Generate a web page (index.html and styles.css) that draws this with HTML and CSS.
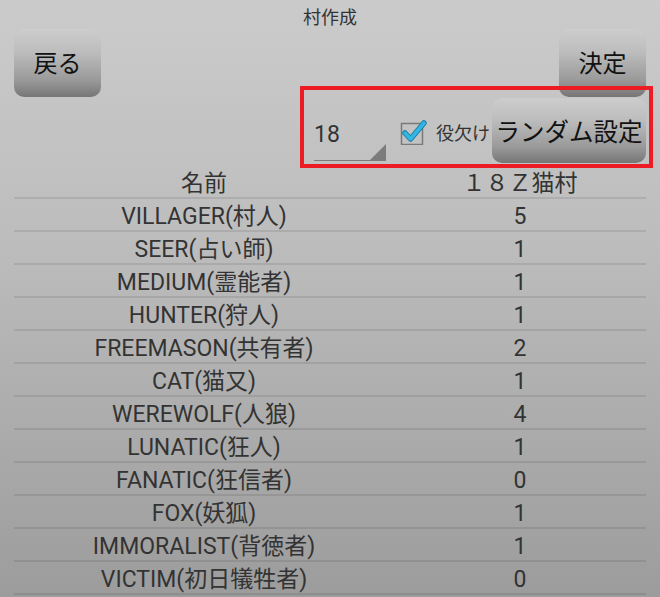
FILE: index.html
```html
<!DOCTYPE html>
<html lang="ja">
<head>
<meta charset="utf-8">
<title>村作成</title>
<link rel="stylesheet" href="styles.css">
</head>
<body>
<div class="screen">
  <div class="title">村作成</div>
  <div class="topbar">
    <button class="btn btn-small">戻る</button>
    <button class="btn btn-small">決定</button>
  </div>
  <div class="controls">
    <div class="spinner">
      <span class="spinner-value">18</span>
      <span class="spinner-tri"></span>
    </div>
    <label class="check">
      <svg class="check-box" width="30" height="30" viewBox="0 0 30 30">
        <rect x="2.5" y="8.5" width="21" height="21" fill="none" stroke="#7a7a7a" stroke-width="1.5"/>
        <path d="M6 18 L11.5 24 L25 8" fill="none" stroke="#1d7fa3" stroke-width="5.5" stroke-linecap="round" stroke-linejoin="round"/>
        <path d="M6 18 L11.5 24 L25 8" fill="none" stroke="#33b5e5" stroke-width="3.5" stroke-linecap="round" stroke-linejoin="round"/>
      </svg>
      <span class="check-label">役欠け</span>
    </label>
    <button class="btn btn-random">ランダム設定</button>
  </div>
  <div class="table">
    <div class="row head"><span>名前</span><span>１８Ｚ猫村</span></div>
    <div class="row"><span>VILLAGER(村人)</span><span>5</span></div>
    <div class="row"><span>SEER(占い師)</span><span>1</span></div>
    <div class="row"><span>MEDIUM(霊能者)</span><span>1</span></div>
    <div class="row"><span>HUNTER(狩人)</span><span>1</span></div>
    <div class="row"><span>FREEMASON(共有者)</span><span>2</span></div>
    <div class="row"><span>CAT(猫又)</span><span>1</span></div>
    <div class="row"><span>WEREWOLF(人狼)</span><span>4</span></div>
    <div class="row"><span>LUNATIC(狂人)</span><span>1</span></div>
    <div class="row"><span>FANATIC(狂信者)</span><span>0</span></div>
    <div class="row"><span>FOX(妖狐)</span><span>1</span></div>
    <div class="row"><span>IMMORALIST(背徳者)</span><span>1</span></div>
    <div class="row"><span>VICTIM(初日犠牲者)</span><span>0</span></div>
  </div>
  <div class="highlight"></div>
</div>
</body>
</html>
```

FILE: styles.css
```css
html, body {
  margin: 0;
  padding: 0;
}
body {
  width: 660px;
  height: 597px;
  overflow: hidden;
  background: linear-gradient(to bottom, #cbcbcb 0%, #bdbdbd 40%, #9c9c9c 100%);
  font-family: Roboto, "Noto Sans CJK JP", sans-serif;
  color: #333;
}
.screen {
  position: relative;
  height: 597px;
}
.title {
  height: 29px;
  line-height: 35px;
  text-align: center;
  font-size: 18px;
  color: #333;
}
.topbar {
  display: flex;
  justify-content: space-between;
  padding: 0 14px 0 14px;
  height: 69px;
}
.btn {
  border: none;
  border-radius: 10px;
  background: linear-gradient(to bottom, #cdcdcd 0%, #bcbcbc 35%, #9a9a9a 75%, #767676 100%);
  font-family: Roboto, "Noto Sans CJK JP", sans-serif;
  color: #111;
  padding: 0;
  margin: 0;
}
.btn-small {
  width: 87px;
  height: 68px;
  font-size: 24px;
  line-height: 24px;
  padding-top: 2px;
}
.controls {
  display: flex;
  justify-content: flex-end;
  align-items: flex-start;
  padding-right: 14px;
  height: 68px;
}
.spinner {
  position: relative;
  width: 72px;
  height: 63px;
  margin-right: 15px;
  border-bottom: 1px solid #7c7c7c;
  box-sizing: border-box;
}
.spinner-value {
  display: block;
  padding-top: 25px;
  padding-left: 0;
  font-size: 23px;
  line-height: 24px;
  color: #333;
}
.spinner-tri {
  position: absolute;
  right: 0;
  bottom: 0;
  width: 0;
  height: 0;
  border-left: 16px solid transparent;
  border-bottom: 16px solid #7c7c7c;
}
.check {
  display: flex;
  align-items: flex-start;
  margin-top: 17px;
}
.check-box {
  display: block;
  margin-left: -2px;
}
.check-label {
  font-size: 18px;
  margin-left: 7px;
  margin-top: 6px;
  line-height: 26px;
  color: #333;
}
.btn-random {
  width: 154px;
  height: 65px;
  font-size: 24.5px;
  line-height: 26px;
  padding-top: 4px;
  margin-left: 2px;
}
.table {
  margin: 0 14px;
}
.row {
  display: grid;
  grid-template-columns: 380px 1fr;
  height: 33px;
  box-sizing: border-box;
  border-bottom: 2px solid rgba(0, 0, 0, 0.09);
  font-size: 23px;
  line-height: 36px;
  text-align: center;
  color: #333;
}
.row span {
  display: block;
  height: 31px;
  overflow: visible;
}
.highlight {
  position: absolute;
  left: 300px;
  top: 86px;
  width: 353px;
  height: 82px;
  box-sizing: border-box;
  border: 4px solid #ed1c24;
  pointer-events: none;
}
```
